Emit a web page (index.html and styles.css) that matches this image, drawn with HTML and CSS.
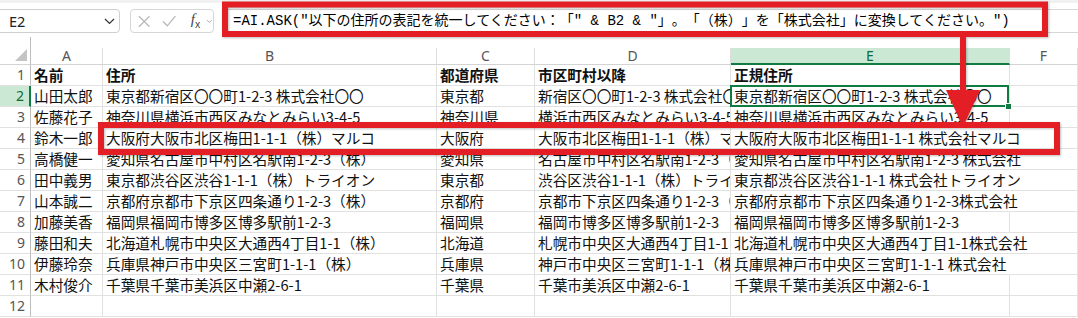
FILE: index.html
```html
<!DOCTYPE html>
<html lang="ja">
<head>
  <meta charset="utf-8">
  <title>AI.ASK - 住所の表記統一</title>
  <link rel="stylesheet" href="styles.css">
</head>
<body>
  <!-- Formula bar: name box, cancel/enter/fx buttons, formula input -->
  <div class="formula-bar">
    <div class="name-box">
      <span>E2</span>
      <svg class="chevron" width="11" height="7" viewBox="0 0 11 7"><path d="M1 1l4.5 4.5L10 1" fill="none" stroke="#333" stroke-width="1.2"/></svg>
    </div>
    <div class="fx-box">
      <svg width="13" height="13" viewBox="0 0 13 13"><path d="M1 1l11 11M12 1L1 12" stroke="#b8b8b8" stroke-width="1.3"/></svg>
      <svg width="15" height="12" viewBox="0 0 15 12"><path d="M1 6.5l4.5 4.5L14 1" fill="none" stroke="#b8b8b8" stroke-width="1.3"/></svg>
      <span class="fx">f<sub>x</sub></span>
      <svg width="7" height="5" viewBox="0 0 7 5"><path d="M1 1l2.5 2.5L6 1" fill="none" stroke="#aaa" stroke-width="1"/></svg>
    </div>
    <div class="formula-input">=AI.ASK("以下の住所の表記を統一してください：「" &amp; B2 &amp; "」。「（株）」を「株式会社」に変換してください。")</div>
  </div>

  <!-- Worksheet grid -->
  <div class="sheet">
    <div class="corner"><span class="tri"></span></div>
    <div class="col-head">A</div>
    <div class="col-head">B</div>
    <div class="col-head">C</div>
    <div class="col-head">D</div>
    <div class="col-head active">E</div>
    <div class="col-head">F</div>

    <div class="row-head">1</div>
    <div class="cell bold">名前</div>
    <div class="cell bold">住所</div>
    <div class="cell bold">都道府県</div>
    <div class="cell bold">市区町村以降</div>
    <div class="cell e bold">正規住所</div>
    <div class="cell"></div>

    <div class="row-head active">2</div>
    <div class="cell">山田太郎</div>
    <div class="cell">東京都新宿区〇〇町1-2-3 株式会社〇〇</div>
    <div class="cell">東京都</div>
    <div class="cell">新宿区〇〇町1-2-3 株式会社〇〇</div>
    <div class="cell e selected">東京都新宿区〇〇町1-2-3 株式会社〇〇<span class="handle"></span></div>
    <div class="cell"></div>

    <div class="row-head">3</div>
    <div class="cell">佐藤花子</div>
    <div class="cell">神奈川県横浜市西区みなとみらい3-4-5</div>
    <div class="cell">神奈川県</div>
    <div class="cell">横浜市西区みなとみらい3-4-5</div>
    <div class="cell e">神奈川県横浜市西区みなとみらい3-4-5</div>
    <div class="cell"></div>

    <div class="row-head">4</div>
    <div class="cell">鈴木一郎</div>
    <div class="cell">大阪府大阪市北区梅田1-1-1（株）マルコ</div>
    <div class="cell">大阪府</div>
    <div class="cell">大阪市北区梅田1-1-1（株）マルコ</div>
    <div class="cell e spill">大阪府大阪市北区梅田1-1-1 株式会社マルコ</div>
    <div class="cell"></div>

    <div class="row-head">5</div>
    <div class="cell">高橋健一</div>
    <div class="cell">愛知県名古屋市中村区名駅南1-2-3（株）</div>
    <div class="cell">愛知県</div>
    <div class="cell">名古屋市中村区名駅南1-2-3（株）</div>
    <div class="cell e spill">愛知県名古屋市中村区名駅南1-2-3 株式会社</div>
    <div class="cell"></div>

    <div class="row-head">6</div>
    <div class="cell">田中義男</div>
    <div class="cell">東京都渋谷区渋谷1-1-1（株）トライオン</div>
    <div class="cell">東京都</div>
    <div class="cell">渋谷区渋谷1-1-1（株）トライオン</div>
    <div class="cell e spill">東京都渋谷区渋谷1-1-1 株式会社トライオン</div>
    <div class="cell"></div>

    <div class="row-head">7</div>
    <div class="cell">山本誠二</div>
    <div class="cell">京都府京都市下京区四条通り1-2-3（株）</div>
    <div class="cell">京都府</div>
    <div class="cell">京都市下京区四条通り1-2-3（株）</div>
    <div class="cell e spill">京都府京都市下京区四条通り1-2-3株式会社</div>
    <div class="cell"></div>

    <div class="row-head">8</div>
    <div class="cell">加藤美香</div>
    <div class="cell">福岡県福岡市博多区博多駅前1-2-3</div>
    <div class="cell">福岡県</div>
    <div class="cell">福岡市博多区博多駅前1-2-3</div>
    <div class="cell e">福岡県福岡市博多区博多駅前1-2-3</div>
    <div class="cell"></div>

    <div class="row-head">9</div>
    <div class="cell">藤田和夫</div>
    <div class="cell">北海道札幌市中央区大通西4丁目1-1（株）</div>
    <div class="cell">北海道</div>
    <div class="cell">札幌市中央区大通西4丁目1-1（株）</div>
    <div class="cell e spill">北海道札幌市中央区大通西4丁目1-1株式会社</div>
    <div class="cell"></div>

    <div class="row-head">10</div>
    <div class="cell">伊藤玲奈</div>
    <div class="cell">兵庫県神戸市中央区三宮町1-1-1（株）</div>
    <div class="cell">兵庫県</div>
    <div class="cell">神戸市中央区三宮町1-1-1（株）</div>
    <div class="cell e spill">兵庫県神戸市中央区三宮町1-1-1 株式会社</div>
    <div class="cell"></div>

    <div class="row-head">11</div>
    <div class="cell">木村俊介</div>
    <div class="cell">千葉県千葉市美浜区中瀬2-6-1</div>
    <div class="cell">千葉県</div>
    <div class="cell">千葉市美浜区中瀬2-6-1</div>
    <div class="cell e">千葉県千葉市美浜区中瀬2-6-1</div>
    <div class="cell"></div>

    <div class="row-head">12</div>
    <div class="cell"></div>
    <div class="cell"></div>
    <div class="cell"></div>
    <div class="cell"></div>
    <div class="cell e"></div>
    <div class="cell"></div>
  </div>

  <!-- Red callout boxes and arrow drawn over the sheet -->
  <svg class="callout" width="1078" height="318" viewBox="0 0 1078 318">
    <rect x="225" y="4.5" width="820" height="29.5" fill="none" stroke="#e31e24" stroke-width="6"/>
    <line x1="963" y1="36" x2="963" y2="94" stroke="#e31e24" stroke-width="6"/>
    <polygon points="946,90 980,90 963,127" fill="#e31e24"/>
    <rect x="101" y="125" width="956" height="27" fill="none" stroke="#e31e24" stroke-width="6"/>
  </svg>
</body>
</html>
```

FILE: styles.css
```css
/* Page */
body {
  margin: 0;
  width: 1078px;
  height: 318px;
  overflow: hidden;
  position: relative;
  background: #fff;
  font-family: "Noto Sans", "Noto Sans CJK JP", sans-serif;
  color: #000;
  text-spacing-trim: space-all;
}

/* Formula bar row */
.formula-bar {
  display: flex;
  align-items: flex-start;
  height: 37px;
  padding-top: 9px;
  box-sizing: border-box;
  border-top: 3px solid #f1f1f1;
}

.name-box {
  display: flex;
  align-items: center;
  justify-content: space-between;
  width: 126px;
  height: 24px;
  margin-top: -3px;
  margin-left: -6px;
  padding: 0 4px 0 14px;
  box-sizing: border-box;
  border: 1px solid #cfcfcf;
  border-radius: 4px;
  font-size: 14.5px;
  color: #222;
}

.fx-box {
  display: flex;
  align-items: center;
  gap: 12px;
  width: 84px;
  height: 24px;
  margin-top: -3px;
  margin-left: 10px;
  padding-left: 7px;
  box-sizing: border-box;
  border: 1px solid #d6d6d6;
  border-radius: 4px;
}

.fx-box .fx {
  font-family: "Liberation Serif", serif;
  font-style: italic;
  font-size: 15px;
  color: #444;
  margin-left: 2px;
  margin-right: -6px;
}

.fx-box .fx sub {
  font-size: 10px;
  font-style: normal;
  font-family: "Noto Sans", sans-serif;
}

/* Formula input box */
.formula-input {
  flex: 1;
  height: 24px;
  margin-top: -3px;
  margin-left: 8px;
  margin-right: -10px;
  padding-left: 10px;
  box-sizing: border-box;
  border: 1px solid #d6d6d6;
  border-radius: 4px;
  font-family: "Liberation Mono", "Noto Sans CJK JP", monospace;
  font-size: 14px;
  line-height: 22px;
  white-space: pre;
  overflow: hidden;
}

/* Worksheet grid */
.sheet {
  display: grid;
  grid-template-columns: 31px 72px 334px 98px 196px 279px 68px;
  grid-template-rows: 28px repeat(12, 21px);
}

/* Select-all corner */
.corner {
  position: relative;
  border-right: 1px solid #bdbdbd;
  border-bottom: 1px solid #d4d4d4;
}

.corner .tri {
  position: absolute;
  right: 3px;
  bottom: 3px;
  width: 0;
  height: 0;
  border-left: 12px solid transparent;
  border-bottom: 12px solid #c4c4c4;
}

/* Column letters */
.col-head {
  align-self: end;
  height: 17px;
  line-height: 16px;
  text-align: center;
  font-size: 14px;
  color: #555;
  border-right: 1px solid #dedede;
  border-bottom: 1px solid #d4d4d4;
  box-sizing: border-box;
}

.col-head.active {
  background: #cbe8d5;
  color: #0e6b35;
  border-bottom: 2px solid #107c41;
}

/* Row numbers */
.row-head {
  text-align: right;
  padding-right: 5px;
  font-size: 14px;
  line-height: 20px;
  color: #555;
  border-right: 1px solid #bdbdbd;
  border-bottom: 1px solid #e1e1e1;
}

.row-head.active {
  background: #cbe8d5;
  color: #0e6b35;
  border-right: 2px solid #107c41;
}

/* Data cells */
.cell {
  padding: 0 3px;
  font-family: "Noto Sans CJK JP", sans-serif;
  font-size: 11pt;
  line-height: 20px;
  white-space: nowrap;
  overflow: hidden;
  border-right: 1px solid #e1e1e1;
  border-bottom: 1px solid #e1e1e1;
  color: #111;
}

.cell.bold {
  font-weight: 700;
}

/* Column E text may run into the empty F column */
.cell.e {
  overflow: visible;
}

.cell.spill {
  border-right-color: transparent;
}

/* Active cell outline */
.cell.selected {
  position: relative;
}

.cell.selected::before {
  content: "";
  position: absolute;
  top: -1px;
  left: -1px;
  right: 0;
  bottom: -1px;
  border: 2px solid #107c41;
}

.cell.selected .handle {
  position: absolute;
  right: -3px;
  bottom: -4px;
  width: 5px;
  height: 5px;
  background: #107c41;
  border: 1px solid #fff;
}

/* Annotation overlay */
.callout {
  position: absolute;
  top: 0;
  left: 0;
  pointer-events: none;
  filter: drop-shadow(1px 1px 1px rgba(0, 0, 0, 0.25));
}
```
